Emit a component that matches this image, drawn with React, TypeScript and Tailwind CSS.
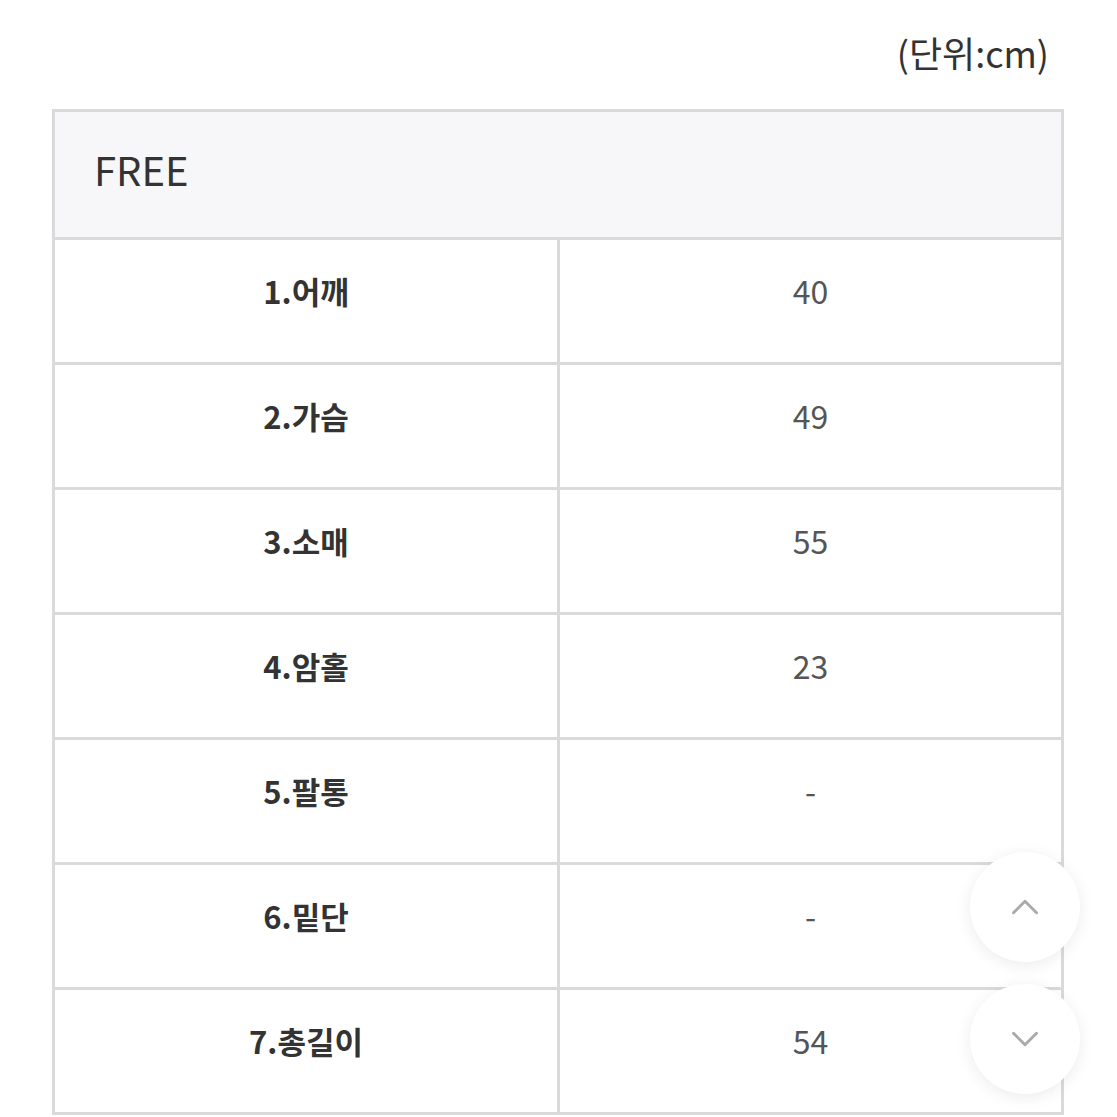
import { ChevronUp, ChevronDown } from "lucide-react";

const rows = [
  { label: "1.어깨", value: "40" },
  { label: "2.가슴", value: "49" },
  { label: "3.소매", value: "55" },
  { label: "4.암홀", value: "23" },
  { label: "5.팔통", value: "-" },
  { label: "6.밑단", value: "-" },
  { label: "7.총길이", value: "54" },
];

const App = () => {
  return (
    <div
      className="relative w-[1117px] h-[1117px] overflow-hidden bg-white text-[#333]"
      style={{ fontFamily: '"Noto Sans CJK KR", "Noto Sans", sans-serif' }}
    >
      <div className="flex justify-end pr-[68px] pt-[26px] h-[109px]">
        <span className="text-[36px] leading-[52px] text-[#333]">(단위:cm)</span>
      </div>
      <div className="ml-[52px] w-[1012px] border-[3px] border-[#dadada]">
        <div className="h-[125px] bg-[#f7f7f9] flex items-center pl-[39px] pb-[12px]">
          <span className="text-[40px] text-[#333]">FREE</span>
        </div>
        {rows.map((r) => (
          <div key={r.label} className="grid grid-cols-[502px_3px_1fr] h-[125px] border-t-[3px] border-[#dadada]">
            <div className="flex items-center justify-center pb-[20px] text-[31px] font-bold text-[#333]">{r.label}</div>
            <div className="bg-[#dadada]" />
            <div className="flex items-center justify-center pb-[22px] text-[32px] text-[#555]">{r.value}</div>
          </div>
        ))}
      </div>
      <button className="absolute left-[970px] top-[852px] w-[110px] h-[110px] rounded-full bg-white shadow-[0_3px_16px_rgba(0,0,0,0.08)] flex items-center justify-center">
        <ChevronUp className="w-[46px] h-[46px] text-[#aaa]" strokeWidth={1.5} />
      </button>
      <button className="absolute left-[970px] top-[984px] w-[110px] h-[110px] rounded-full bg-white shadow-[0_3px_16px_rgba(0,0,0,0.08)] flex items-center justify-center">
        <ChevronDown className="w-[46px] h-[46px] text-[#aaa]" strokeWidth={1.5} />
      </button>
    </div>
  );
};

export default App;
